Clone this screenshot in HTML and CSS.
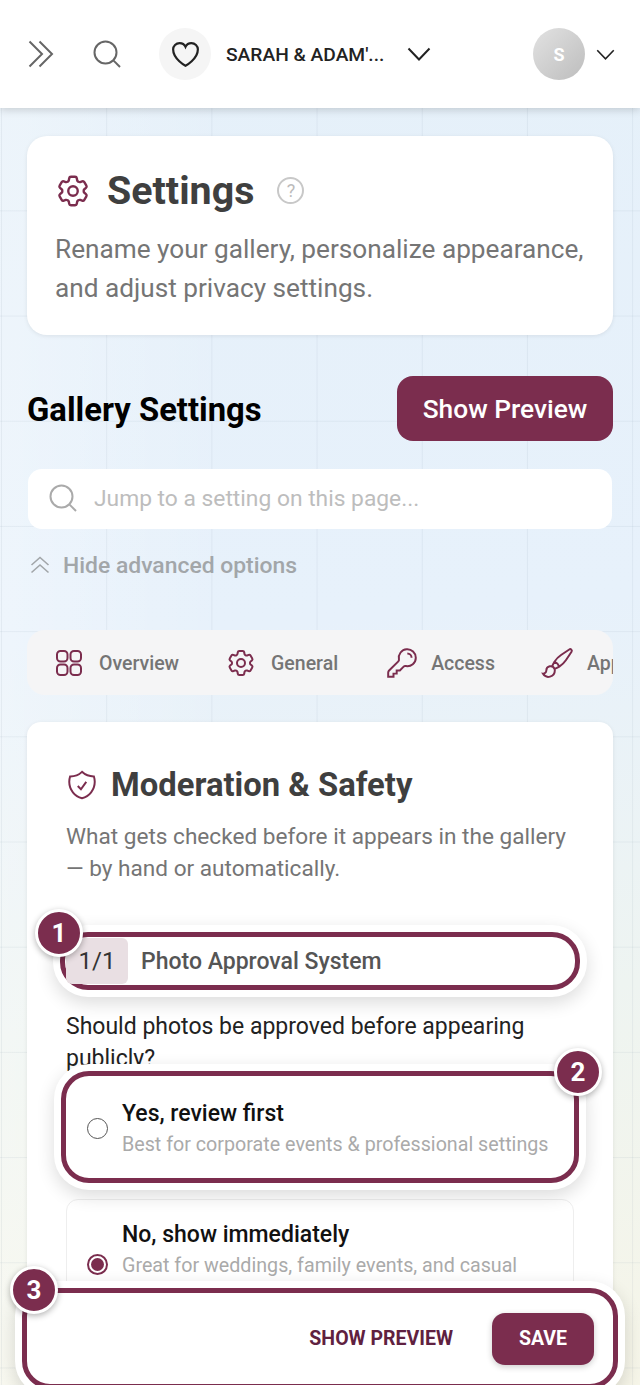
FILE: index.html
```html
<!DOCTYPE html>
<html lang="en">
<head>
    <meta charset="UTF-8">
    <meta name="viewport" content="width=device-width, initial-scale=1.0">
    <title>Gallery Settings</title>
    <link rel="stylesheet" href="styles.css">
</head>
<body>
    <svg class="defs" width="0" height="0">
        <symbol id="gear" viewBox="0 0 24 24"><path d="M9.594 3.94c.09-.542.56-.94 1.11-.94h2.593c.55 0 1.02.398 1.11.94l.213 1.281c.063.374.313.686.645.87.074.04.147.083.22.127.325.196.72.257 1.075.124l1.217-.456a1.125 1.125 0 0 1 1.37.49l1.296 2.247a1.125 1.125 0 0 1-.26 1.431l-1.003.827c-.293.241-.438.613-.43.992a7.723 7.723 0 0 1 0 .255c-.008.378.137.75.43.991l1.004.827c.424.35.534.955.26 1.43l-1.298 2.247a1.125 1.125 0 0 1-1.369.491l-1.217-.456c-.355-.133-.75-.072-1.076.124a6.47 6.47 0 0 1-.22.128c-.331.183-.581.495-.644.869l-.213 1.281c-.09.543-.56.94-1.11.94h-2.594c-.55 0-1.019-.398-1.11-.94l-.213-1.281c-.062-.374-.312-.686-.644-.87a6.52 6.52 0 0 1-.22-.127c-.325-.196-.72-.257-1.076-.124l-1.217.456a1.125 1.125 0 0 1-1.369-.49l-1.297-2.247a1.125 1.125 0 0 1 .26-1.431l1.004-.827c.292-.24.437-.613.43-.991a6.932 6.932 0 0 1 0-.255c.007-.38-.138-.751-.43-.992l-1.004-.827a1.125 1.125 0 0 1-.26-1.43l1.297-2.247a1.125 1.125 0 0 1 1.37-.491l1.216.456c.356.133.751.072 1.076-.124.072-.044.146-.086.22-.128.332-.183.582-.495.644-.869l.214-1.28Z"/><circle cx="12" cy="12" r="3"/></symbol>
        <symbol id="lens" viewBox="0 0 28 28"><circle cx="12.5" cy="12.5" r="11"/><path d="M20.6 20.6 27 27"/></symbol>
        <symbol id="chev" viewBox="0 0 24 14"><path d="M1.5 1.5 12 12.5 22.5 1.5"/></symbol>
    </svg>

    <div class="page">
        <header class="topbar">
            <svg class="ico-expand" viewBox="0 0 26 28"><path d="M1.5 1.5 14 14 1.5 26.5M11.5 1.5 24 14 11.5 26.5"/></svg>
            <svg class="ico-search"><use href="#lens"/></svg>
            <div class="heart-wrap">
                <svg class="ico-heart" viewBox="0 0 24 24"><path d="M21 8.25c0-2.485-2.099-4.5-4.688-4.5-1.935 0-3.597 1.126-4.312 2.733-.715-1.607-2.377-2.733-4.313-2.733C5.1 3.75 3 5.765 3 8.25c0 7.22 9 12 9 12s9-4.78 9-12Z"/></svg>
            </div>
            <span class="event-name">SARAH &amp; ADAM'...</span>
            <svg class="ico-chev"><use href="#chev"/></svg>
            <div class="avatar">S</div>
            <svg class="ico-chev small"><use href="#chev"/></svg>
        </header>

        <main class="content">
            <section class="intro card">
                <div class="intro-head">
                    <svg class="ico-gear"><use href="#gear"/></svg>
                    <h1>Settings</h1>
                    <span class="help">?</span>
                </div>
                <p>Rename your gallery, personalize appearance, and adjust privacy settings.</p>
            </section>

            <div class="title-row">
                <h2>Gallery Settings</h2>
                <button class="preview-btn">Show Preview</button>
            </div>

            <div class="search-box">
                <svg class="ico-find"><use href="#lens"/></svg>
                <span>Jump to a setting on this page...</span>
            </div>

            <div class="advanced">
                <svg viewBox="0 0 20 18"><path d="M1.5 9 10 1.5 18.5 9M1.5 16.5 10 9l8.5 7.5"/></svg>
                <span>Hide advanced options</span>
            </div>

            <nav class="tabs">
                <div class="tab tab-overview">
                    <svg viewBox="0 0 26 26"><rect x="1" y="1" width="10.5" height="10.5" rx="3.5"/><rect x="14.5" y="1" width="10.5" height="10.5" rx="3.5"/><rect x="1" y="14.5" width="10.5" height="10.5" rx="3.5"/><rect x="14.5" y="14.5" width="10.5" height="10.5" rx="3.5"/></svg>
                    <span>Overview</span>
                </div>
                <div class="tab tab-general">
                    <svg><use href="#gear"/></svg>
                    <span>General</span>
                </div>
                <div class="tab tab-access">
                    <svg viewBox="0 0 24 24"><path d="M15.75 5.25a3 3 0 0 1 3 3m3 0a6 6 0 0 1-7.029 5.912c-.563-.097-1.159.026-1.563.43L10.5 17.25H8.25v2.25H6v2.25H2.25v-2.818c0-.597.237-1.17.659-1.591l6.499-6.499c.404-.404.527-1 .43-1.563A6 6 0 1 1 21.75 8.25Z"/></svg>
                    <span>Access</span>
                </div>
                <div class="tab tab-appearance">
                    <svg viewBox="0 0 24 24"><path d="M9.53 16.122a3 3 0 0 0-5.78 1.128 2.25 2.25 0 0 1-2.4 2.245 4.5 4.5 0 0 0 8.4-2.245c0-.399-.078-.78-.22-1.128Zm0 0a15.998 15.998 0 0 0 3.388-1.62m-5.043-.025a15.994 15.994 0 0 1 1.622-3.395m3.42 3.42a15.995 15.995 0 0 0 4.764-4.648l3.876-5.814a1.151 1.151 0 0 0-1.597-1.597L14.146 6.32a15.996 15.996 0 0 0-4.649 4.763m3.42 3.42a6.776 6.776 0 0 0-3.42-3.42"/></svg>
                    <span>Appearance</span>
                </div>
            </nav>

            <section class="panel card">
                <div class="panel-head">
                    <svg viewBox="0 0 24 24"><path d="M9 12.75 11.25 15 15 9.75m-3-7.036A11.959 11.959 0 0 1 3.598 6 11.99 11.99 0 0 0 3 9.749c0 5.592 3.824 10.29 9 11.623 5.176-1.332 9-6.03 9-11.622 0-1.31-.21-2.571-.598-3.751h-.152c-3.196 0-6.1-1.248-8.25-3.285Z"/></svg>
                    <h3>Moderation &amp; Safety</h3>
                </div>
                <p class="panel-desc">What gets checked before it appears in the gallery — by hand or automatically.</p>

                <div class="setting-head spot">
                    <span class="count">1/1</span>
                    <span class="setting-name">Photo Approval System</span>
                    <span class="step step-1">1</span>
                </div>

                <p class="question">Should photos be approved before appearing publicly?</p>

                <label class="option first spot">
                    <span class="radio"></span>
                    <span class="option-text">
                        <strong>Yes, review first</strong>
                        <small>Best for corporate events &amp; professional settings</small>
                    </span>
                    <span class="step step-2">2</span>
                </label>

                <label class="option">
                    <span class="radio checked"></span>
                    <span class="option-text">
                        <strong>No, show immediately</strong>
                        <small>Great for weddings, family events, and casual celebrations</small>
                    </span>
                </label>
            </section>
        </main>

        <footer class="save-bar spot">
            <span class="step step-3">3</span>
            <button class="link-btn">SHOW PREVIEW</button>
            <button class="save-btn">SAVE</button>
        </footer>
    </div>
</body>
</html>
```

FILE: styles.css
```css
* {
    margin: 0;
    padding: 0;
    box-sizing: border-box;
    font-family: Roboto, "Liberation Sans", sans-serif;
}
body {
    background: #fff;
}
svg {
    fill: none;
    stroke: currentColor;
    display: block;
    flex-shrink: 0;
}
.defs {
    position: absolute;
}
button {
    border: none;
    background: none;
}
.page {
    position: relative;
    width: 640px;
    height: 1385px;
    overflow: hidden;
    background-color: #eaf2f7;
    background-image:
        linear-gradient(rgba(120, 140, 160, 0.1) 1px, transparent 1px),
        linear-gradient(90deg, rgba(120, 140, 160, 0.1) 1px, transparent 1px),
        linear-gradient(90deg, rgba(255, 255, 255, 0.3) 0%, rgba(255, 255, 255, 0) 35%),
        linear-gradient(175deg, #e5f0f9 0%, #e7f1fb 45%, #eef4f1 72%, #f6f5e8 100%);
    background-size: 105.2px 105.2px, 105.2px 105.2px, 100% 100%, 100% 100%;
    background-position: 0 0, 1px 0, 0 0, 0 0;
}

/* top bar */
.topbar {
    position: relative;
    height: 108px;
    background: #fff;
    box-shadow: 0 2px 8px rgba(0, 0, 0, 0.16);
    display: flex;
    align-items: center;
    padding-left: 28px;
    color: #222;
}
.ico-expand {
    width: 26px;
    height: 28px;
    stroke: #666;
    stroke-width: 2;
}
.ico-search {
    width: 28px;
    height: 28px;
    margin-left: 39px;
    stroke: #666;
    stroke-width: 2;
}
.heart-wrap {
    width: 52px;
    height: 52px;
    margin-left: 38px;
    border-radius: 50%;
    background: #f5f5f5;
    display: flex;
    align-items: center;
    justify-content: center;
}
.ico-heart {
    width: 33px;
    height: 33px;
    stroke: #222;
    stroke-width: 1.6;
}
.event-name {
    margin-left: 15px;
    width: 181px;
    font-size: 19.2px;
    font-weight: 500;
    white-space: nowrap;
}
.ico-chev {
    width: 24px;
    height: 14px;
    stroke: #222;
    stroke-width: 2;
}
.avatar {
    width: 52px;
    height: 52px;
    margin-left: 102px;
    border-radius: 50%;
    background: linear-gradient(135deg, #e2e2e2, #bdbdbd);
    color: #fff;
    font-size: 18px;
    font-weight: 700;
    display: flex;
    align-items: center;
    justify-content: center;
}
.ico-chev.small {
    width: 19px;
    height: 11px;
    margin-left: 11px;
}

/* content */
.content {
    padding: 28px 27px 0;
}
.card {
    background: #fff;
    box-shadow: 0 1px 4px rgba(0, 0, 0, 0.08);
}
.intro {
    height: 199px;
    border-radius: 20px;
    padding: 36px 28px 0;
}
.intro-head {
    display: flex;
    align-items: center;
    height: 37px;
}
.ico-gear {
    width: 38px;
    height: 38px;
    margin-left: -1px;
    stroke: #7b2d4e;
    stroke-width: 1.5;
}
.intro h1 {
    margin-left: 15px;
    font-size: 39.4px;
    font-weight: 700;
    color: #3f3f3f;
}
.help {
    width: 27px;
    height: 27px;
    margin-left: 23px;
    border: 2px solid #c8c8c8;
    border-radius: 50%;
    color: #bbb;
    font-size: 18px;
    line-height: 23px;
    text-align: center;
}
.intro p {
    margin-top: 21px;
    font-size: 26.2px;
    line-height: 39px;
    color: #757575;
}
.title-row {
    margin-top: 41px;
    display: flex;
    align-items: center;
    justify-content: space-between;
}
.title-row h2 {
    padding-top: 2px;
    font-size: 32.8px;
    font-weight: 700;
    color: #000;
}
.preview-btn {
    width: 216px;
    height: 65px;
    border-radius: 16px;
    background: #7b2d4e;
    color: #fff;
    font-size: 26.3px;
    font-weight: 500;
}
.search-box {
    margin: 28px 1px 0;
    height: 60px;
    border-radius: 14px;
    background: #fff;
    display: flex;
    align-items: center;
    padding: 0 0 2px 21px;
    font-size: 22.8px;
    color: #bdbdbd;
}
.ico-find {
    width: 28px;
    height: 28px;
    margin-right: 17px;
    stroke: #aaa;
    stroke-width: 2;
}
.advanced {
    margin-top: 22px;
    height: 28px;
    display: flex;
    align-items: center;
    padding-left: 3px;
    font-size: 22.9px;
    font-weight: 500;
    color: #a2a6a9;
}
.advanced svg {
    width: 20px;
    height: 18px;
    margin-right: 13px;
    stroke-width: 1.6;
}
.tabs {
    margin-top: 51px;
    height: 65px;
    border-radius: 18px;
    background: #f5f5f6;
    overflow: hidden;
    display: flex;
    align-items: center;
    padding: 1px 0 0 29px;
    font-size: 19.5px;
    font-weight: 500;
    color: #757575;
    white-space: nowrap;
}
.tab {
    display: flex;
    align-items: center;
}
.tab svg {
    width: 26px;
    height: 26px;
    stroke: #7b2d4e;
    stroke-width: 2;
}
.tab-overview span {
    margin-left: 17px;
}
.tab-general {
    margin-left: 49px;
}
.tab-general svg {
    width: 32px;
    height: 32px;
    margin-left: -3px;
    stroke-width: 1.5;
}
.tab-general span {
    margin-left: 14px;
}
.tab-access {
    margin-left: 49px;
}
.tab-access svg,
.tab-appearance svg {
    width: 34px;
    height: 34px;
    margin-left: -2px;
    stroke-width: 1.4;
}
.tab-access span {
    margin-left: 12px;
}
.tab-appearance {
    margin-left: 48px;
}
.tab-appearance span {
    margin-left: 12px;
}

/* moderation panel */
.panel {
    margin-top: 27px;
    height: 700px;
    border-radius: 14px;
    padding: 45px 39px 0;
}
.panel-head {
    display: flex;
    align-items: center;
    height: 36px;
}
.panel-head svg {
    width: 34px;
    height: 34px;
    margin-left: -1px;
    stroke: #7b2d4e;
    stroke-width: 1.4;
}
.panel-head h3 {
    margin-left: 12px;
    font-size: 32.8px;
    font-weight: 700;
    color: #3f3f3f;
}
.panel-desc {
    margin-top: 18px;
    font-size: 22.6px;
    line-height: 32px;
    color: #757575;
}
.setting-head {
    margin-top: 53px;
    height: 46px;
    display: flex;
    align-items: center;
}
.count {
    width: 62px;
    height: 46px;
    border-radius: 6px;
    background: #e9dfe3;
    color: #333;
    font-size: 24px;
    line-height: 46px;
    text-align: center;
}
.setting-name {
    margin-left: 13px;
    font-size: 23px;
    font-weight: 500;
    color: #555;
}
.question {
    margin-top: 27px;
    font-size: 23px;
    line-height: 32px;
    color: #222;
}
.option {
    display: flex;
    align-items: center;
    border: 1px solid #eee;
    border-radius: 12px;
    padding-left: 20px;
}
.option.first {
    height: 102px;
    margin-top: 1px;
    padding-top: 3px;
    border-color: transparent;
}
.option:not(.first) {
    margin-top: 21px;
    height: 130px;
}
.radio {
    width: 21px;
    height: 21px;
    flex-shrink: 0;
    border: 1.5px solid #555;
    border-radius: 50%;
    background: #fff;
}
.radio.checked {
    border-color: #7b2d4e;
    border-width: 2px;
    padding: 2px;
    background: #7b2d4e content-box;
}
.option-text {
    margin-left: 14px;
    display: block;
}
.option-text strong {
    display: block;
    font-size: 23px;
    font-weight: 500;
    line-height: 30px;
    color: #111;
}
.option-text small {
    display: block;
    margin-top: 1px;
    font-size: 19.7px;
    line-height: 29px;
    color: #aaa;
}

/* tour highlights */
.spot {
    position: relative;
}
.spot::before {
    content: "";
    position: absolute;
    inset: -6px;
    border: 5px solid #7b2d4e;
    border-radius: 28px;
    background: #fff;
    box-shadow: 0 0 0 7px #fff, 0 6px 18px 7px rgba(0, 0, 0, 0.14);
}
.spot > * {
    position: relative;
    z-index: 1;
}
.spot > .step {
    position: absolute;
    z-index: 2;
    width: 48px;
    height: 48px;
    border: 3px solid #fff;
    border-radius: 50%;
    background: #7b2d4e;
    box-shadow: 0 2px 6px rgba(0, 0, 0, 0.3);
    color: #fff;
    font-size: 26px;
    font-weight: 700;
    line-height: 42px;
    text-align: center;
}
.spot > .step-1 {
    left: -31px;
    top: -29px;
}
.spot > .step-2 {
    right: -29px;
    top: -29px;
}
.spot > .step-3 {
    left: -18px;
    top: -28px;
}

/* bottom bar */
.save-bar {
    position: absolute;
    z-index: 5;
    left: 28px;
    right: 28px;
    bottom: 2px;
    height: 89px;
    display: flex;
    align-items: center;
    justify-content: flex-end;
    padding-right: 18px;
}
.link-btn {
    margin-right: 39px;
    font-size: 19.5px;
    font-weight: 700;
    color: #5f2140;
}
.save-btn {
    width: 102px;
    height: 52px;
    border-radius: 13px;
    background: #7b2d4e;
    box-shadow: 0 2px 6px rgba(0, 0, 0, 0.2);
    color: #fff;
    font-size: 19.5px;
    font-weight: 700;
}
```
